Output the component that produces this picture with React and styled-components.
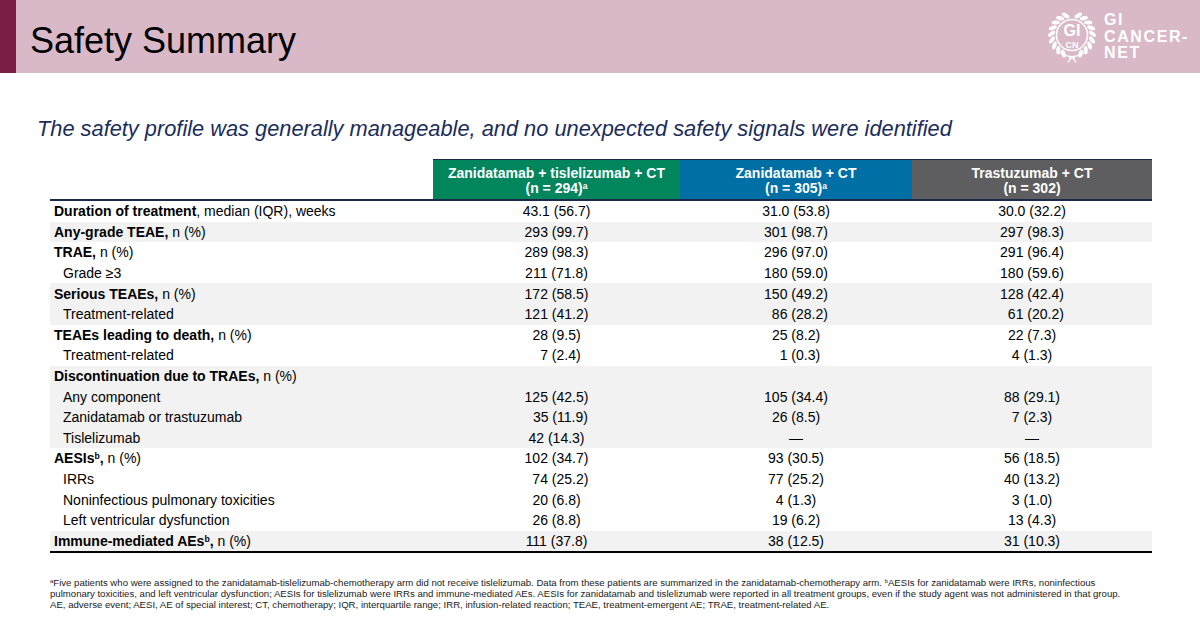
import styled, { createGlobalStyle } from "styled-components";

const GlobalStyle = createGlobalStyle`
  html, body {
    margin: 0;
    padding: 0;
    background: #ffffff;
  }
  body {
    font-family: "Liberation Sans", Arial, sans-serif;
    color: #000;
  }
`;

const columns = [
  { label: "Zanidatamab + tislelizumab + CT", n: "(n = 294)", sup: "a", color: "#00855d" },
  { label: "Zanidatamab + CT", n: "(n = 305)", sup: "a", color: "#006fa6" },
  { label: "Trastuzumab + CT", n: "(n = 302)", sup: null, color: "#5e5e60" },
];

const F = "\u2007";

const rows = [
  { bold: "Duration of treatment", rest: ", median (IQR), weeks", values: ["43.1 (56.7)", "31.0 (53.8)", "30.0 (32.2)"], shade: false },
  { bold: "Any-grade TEAE,", rest: " n (%)", values: ["293 (99.7)", "301 (98.7)", "297 (98.3)"], shade: true },
  { bold: "TRAE,", rest: " n (%)", values: ["289 (98.3)", "296 (97.0)", "291 (96.4)"], shade: false },
  { rest: "Grade ≥3", sub: true, values: ["211 (71.8)", "180 (59.0)", "180 (59.6)"], shade: false },
  { bold: "Serious TEAEs,", rest: " n (%)", values: ["172 (58.5)", "150 (49.2)", "128 (42.4)"], shade: true },
  { rest: "Treatment-related", sub: true, values: ["121 (41.2)", F + "86 (28.2)", F + "61 (20.2)"], shade: true },
  { bold: "TEAEs leading to death,", rest: " n (%)", values: ["28 (9.5)", "25 (8.2)", "22 (7.3)"], shade: false },
  { rest: "Treatment-related", sub: true, values: [F + "7 (2.4)", F + "1 (0.3)", "4 (1.3)"], shade: false },
  { bold: "Discontinuation due to TRAEs,", rest: " n (%)", values: ["", "", ""], shade: true },
  { rest: "Any component", sub: true, values: ["125 (42.5)", "105 (34.4)", "88 (29.1)"], shade: true },
  { rest: "Zanidatamab or trastuzumab", sub: true, values: [F + "35 (11.9)", "26 (8.5)", "7 (2.3)"], shade: true },
  { rest: "Tislelizumab", sub: true, values: ["42 (14.3)", "—", "—"], shade: true },
  { bold: "AESIs", supB: "b", boldAfter: ",", rest: " n (%)", values: ["102 (34.7)", "93 (30.5)", "56 (18.5)"], shade: false },
  { rest: "IRRs", sub: true, values: [F + "74 (25.2)", "77 (25.2)", "40 (13.2)"], shade: false },
  { rest: "Noninfectious pulmonary toxicities", sub: true, values: ["20 (6.8)", "4 (1.3)", "3 (1.0)"], shade: false },
  { rest: "Left ventricular dysfunction", sub: true, values: ["26 (8.8)", "19 (6.2)", "13 (4.3)"], shade: false },
  { bold: "Immune-mediated AEs", supB: "b", boldAfter: ",", rest: " n (%)", values: ["111 (37.8)", "38 (12.5)", "31 (10.3)"], shade: true },
];

const Page = styled.div`
  width: 1200px;
  height: 633px;
  overflow: hidden;
  background: #ffffff;
`;

const Header = styled.header`
  height: 73px;
  display: flex;
  align-items: center;
  background: #d9b9c7;
`;

const AccentBar = styled.div`
  width: 16px;
  align-self: stretch;
  background: #7b1e45;
`;

const Title = styled.h1`
  margin: 0 0 0 14px;
  font-size: 36px;
  font-weight: 400;
  color: #000;
  line-height: 1;
  padding-top: 8px;
`;

const Logo = styled.div`
  margin-left: auto;
  margin-right: 11px;
  display: flex;
  align-items: center;
  gap: 8px;
`;

const LogoText = styled.div`
  display: flex;
  flex-direction: column;
  color: #ffffff;
  font-size: 16px;
  font-weight: 700;
  line-height: 16.5px;
  letter-spacing: 1.6px;
  padding-top: 1px;
`;

const Subtitle = styled.p`
  margin: 43px 0 0 37px;
  font-size: 21.8px;
  line-height: 26px;
  font-style: italic;
  color: #1b2d5b;
`;

const Table = styled.div`
  margin: 17px 0 0 50px;
  width: 1102px;
  display: grid;
  grid-template-columns: 383px 247px 232px 240px;
`;

const HeadBlank = styled.div`
  height: 40px;
`;

const HeadCell = styled.div`
  height: 40px;
  box-sizing: border-box;
  border-top: 1px solid #1c2a4a;
  background: ${(p) => p.$color};
  color: #ffffff;
  font-weight: 700;
  font-size: 14px;
  line-height: 15px;
  display: flex;
  flex-direction: column;
  align-items: center;
  justify-content: center;
  padding-top: 2px;
`;

const Sup = styled.sup`
  font-size: 0.62em;
  line-height: 0;
  vertical-align: 0.45em;
`;

const Body = styled.div`
  grid-column: 1 / -1;
  border-top: 2px solid #1c2a4a;
  border-bottom: 2px solid #000;
`;

const Row = styled.div`
  display: grid;
  grid-template-columns: 383px 247px 232px 240px;
  height: 20.6px;
  align-items: center;
  background: ${(p) => (p.$shade ? "#f2f2f2" : "#ffffff")};
  font-size: 14px;
`;

const Label = styled.div`
  padding-left: ${(p) => (p.$sub ? "13px" : "4px")};
  white-space: nowrap;
`;

const Value = styled.div`
  text-align: center;
  white-space: pre;
`;

const Footnote = styled.p`
  margin: 25px 0 0 50px;
  font-size: 9.6px;
  line-height: 10.7px;
  color: #222;
  white-space: nowrap;
`;

const leafAngles = (from, to, count) =>
  Array.from({ length: count }, (_, i) => from + ((to - from) * i) / (count - 1));

const Wreath = () => {
  const cx = 24;
  const cy = 25;
  const r = 20.5;
  const left = leafAngles(115, 252, 9);
  const right = leafAngles(65, -72, 9);
  const leaf = (a, side, i) => {
    const rad = (a * Math.PI) / 180;
    const x = cx + r * Math.cos(rad);
    const y = cy + r * Math.sin(rad);
    const rot = a + (side === "l" ? 90 - 40 : -90 + 40);
    return (
      <ellipse key={side + i} cx={x} cy={y} rx="2" ry="4.2" transform={`rotate(${rot} ${x} ${y})`} fill="#ffffff" />
    );
  };
  return (
    <svg width="48" height="54" viewBox="0 0 48 54">
      {left.map((a, i) => leaf(a, "l", i))}
      {right.map((a, i) => leaf(a, "r", i))}
      <path d="M 9.5 40.5 A 20 20 0 0 0 24 46.5 A 20 20 0 0 0 38.5 40.5" fill="none" stroke="#fff" strokeWidth="1.2" />
      <circle cx="24" cy="25" r="15.5" fill="none" stroke="#ffffff" strokeWidth="1.6" />
      <text x="24" y="25.5" textAnchor="middle" fontFamily="'Liberation Sans', sans-serif" fontWeight="700" fontSize="16" fill="#fff">GI</text>
      <text x="24" y="37.5" textAnchor="middle" fontFamily="'Liberation Sans', sans-serif" fontWeight="700" fontSize="9" fill="#fff">CN</text>
      <path d="M 24 46.5 L 20 52.5 M 24 46.5 L 28 52.5 M 21 48 L 27 48" stroke="#fff" strokeWidth="1.3" fill="none" />
    </svg>
  );
};

const App = () => (
  <Page>
    <GlobalStyle />
    <Header>
      <AccentBar />
      <Title>Safety Summary</Title>
      <Logo>
        <Wreath />
        <LogoText>
          <span>GI</span>
          <span>CANCER-</span>
          <span>NET</span>
        </LogoText>
      </Logo>
    </Header>

    <Subtitle>
      The safety profile was generally manageable, and no unexpected safety signals were identified
    </Subtitle>

    <Table>
      <HeadBlank />
      {columns.map((c) => (
        <HeadCell key={c.label} $color={c.color}>
          <span>{c.label}</span>
          <span>
            {c.n}
            {c.sup && <Sup>{c.sup}</Sup>}
          </span>
        </HeadCell>
      ))}
      <Body>
        {rows.map((r, i) => (
          <Row key={i} $shade={r.shade}>
            <Label $sub={r.sub}>
              {r.bold && (
                <b>
                  {r.bold}
                  {r.supB && <Sup>{r.supB}</Sup>}
                  {r.boldAfter}
                </b>
              )}
              {r.rest}
            </Label>
            {r.values.map((v, j) => (
              <Value key={j}>{v}</Value>
            ))}
          </Row>
        ))}
      </Body>
    </Table>

    <Footnote>
      <Sup>a</Sup>Five patients who were assigned to the zanidatamab-tislelizumab-chemotherapy arm did not receive
      tislelizumab. Data from these patients are summarized in the zanidatamab-chemotherapy arm. <Sup>b</Sup>AESIs for
      zanidatamab were IRRs, noninfectious
      <br />
      pulmonary toxicities, and left ventricular dysfunction; AESIs for tislelizumab were IRRs and immune-mediated AEs.
      AESIs for zanidatamab and tislelizumab were reported in all treatment groups, even if the study agent was not
      administered in that group.
      <br />
      AE, adverse event; AESI, AE of special interest; CT, chemotherapy; IQR, interquartile range; IRR, infusion-related
      reaction; TEAE, treatment-emergent AE; TRAE, treatment-related AE.
    </Footnote>
  </Page>
);

export default App;
